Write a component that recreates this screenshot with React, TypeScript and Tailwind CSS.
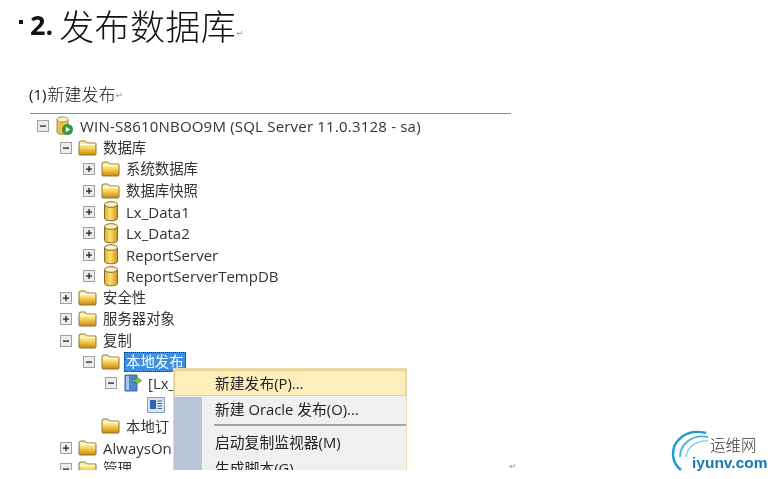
import React from "react";

const ui = "font-['Open_Sans','Noto_Sans_CJK_SC',sans-serif]";

function Exp({ open }: { open: boolean }) {
  return (
    <svg width="12" height="12" viewBox="0 0 12 12" className="shrink-0">
      <rect x="0.5" y="0.5" width="11" height="11" fill="#ececec" stroke="#a0a0a0" />
      <rect x="3" y="5.4" width="6" height="1.4" fill="#333" />
      {!open && <rect x="5.3" y="3" width="1.4" height="6" fill="#333" />}
    </svg>
  );
}

function Folder() {
  return (
    <svg width="19" height="16" viewBox="0 0 19 16" className="shrink-0">
      <defs>
        <linearGradient id="fg" x1="0" y1="0" x2="0" y2="1">
          <stop offset="0" stopColor="#fff3c4" />
          <stop offset="0.45" stopColor="#fbdc62" />
          <stop offset="1" stopColor="#c98610" />
        </linearGradient>
      </defs>
      <path d="M1 3 Q1 1 3 1 H7 L9 3 H17 Q18 3 18 4 V14 Q18 15 17 15 H2 Q1 15 1 14 Z" fill="url(#fg)" stroke="#8f7638" strokeWidth="1" />
      <path d="M2 4.5 H17" stroke="#fffbe6" strokeWidth="1.6" />
    </svg>
  );
}

function Db() {
  return (
    <svg width="16" height="21" viewBox="0 0 16 21" className="shrink-0">
      <defs>
        <linearGradient id="dbg" x1="0" y1="0" x2="1" y2="0">
          <stop offset="0" stopColor="#e3ac22" />
          <stop offset="0.45" stopColor="#fbe06e" />
          <stop offset="1" stopColor="#cf9518" />
        </linearGradient>
      </defs>
      <path d="M1.5 3.5 V17.5 C1.5 20.5 14.5 20.5 14.5 17.5 V3.5 Z" fill="url(#dbg)" stroke="#7d6b3a" strokeWidth="1" />
      <ellipse cx="8" cy="3.5" rx="6.5" ry="2.8" fill="#fdf3c0" stroke="#7d6b3a" strokeWidth="1" />
    </svg>
  );
}

function ServerIcon() {
  return (
    <svg width="20" height="20" viewBox="0 0 20 20" className="shrink-0">
      <path d="M2 3.5 V16.5 C2 19 13 19 13 16.5 V3.5 Z" fill="#eec04f" stroke="#9b8448" strokeWidth="0.9" />
      <ellipse cx="7.5" cy="3.5" rx="5.5" ry="2.6" fill="#fdf0b8" stroke="#9b8448" strokeWidth="0.9" />
      <circle cx="12.5" cy="13.5" r="5.5" fill="#2f9b3b" />
      <path d="M10.8 10.7 L15.3 13.5 L10.8 16.3 Z" fill="#fff" />
    </svg>
  );
}

function PubIcon() {
  return (
    <svg width="20" height="20" viewBox="0 0 20 20" className="shrink-0">
      <path d="M2 2 H14 V18 H2 Z" fill="#4f86cf" stroke="#3a5f9a" strokeWidth="0.9" />
      <path d="M3 3 H6 V17 H3 Z" fill="#a8c8ee" />
      <path d="M9 6.5 H13 V3.5 L18.5 7.5 L13 11.5 V8.8 H9 Z" fill="#7cc04b" stroke="#48802e" strokeWidth="0.7" />
    </svg>
  );
}

function ArticleIcon() {
  return (
    <svg width="18" height="16" viewBox="0 0 18 16" className="shrink-0">
      <rect x="0.5" y="0.5" width="17" height="15" fill="#dbe6f4" stroke="#8aa0bd" />
      <rect x="3" y="3" width="6" height="9" fill="#2f63b5" />
      <path d="M10.5 4 H15 M10.5 6.5 H15 M10.5 9 H15 M10.5 11.5 H15" stroke="#41618f" strokeWidth="1" />
    </svg>
  );
}

function Cjk({ children }: { children: React.ReactNode }) {
  return <span className="text-[14.4px]">{children}</span>;
}

function Row({
  pl,
  exp,
  icon,
  children,
}: {
  pl: string;
  exp?: boolean;
  icon: React.ReactNode;
  children: React.ReactNode;
}) {
  return (
    <div className={`flex h-[21.45px] items-center whitespace-nowrap ${pl}`}>
      <div className="flex w-[13px] shrink-0 justify-start">{exp !== undefined && <Exp open={exp} />}</div>
      <div className="ml-[4px] flex w-[21px] shrink-0 justify-center">{icon}</div>
      <div className="ml-[5px] flex items-center">{children}</div>
    </div>
  );
}

function Ret({ className = "" }: { className?: string }) {
  return <span className={`font-['DejaVu_Sans',sans-serif] text-[9px] leading-none text-[#9a9a9a] ${className}`}>↵</span>;
}

function MenuItem({ children, hot }: { children: React.ReactNode; hot?: boolean }) {
  return (
    <div className={`flex h-[26px] items-center ${hot ? "border border-[#e5cf8e] bg-[#fdeebb] pl-[40px]" : "pl-[41px]"}`}>
      {children}
    </div>
  );
}

export default function App() {
  return (
    <div className={`h-[479px] w-[773px] overflow-hidden bg-white text-[#222] blur-[0.4px] ${ui}`}>
      <div className="flex h-[78px] items-start pl-[19px] pt-[3px]">
        <span className="mt-[17px] h-[4px] w-[4px] shrink-0 bg-[#111]" />
        <span className="ml-[7px] font-['Open_Sans',sans-serif] text-[27px] font-bold leading-[44px] text-[#111]">2.</span>
        <span className="ml-[6px] font-['Noto_Sans_CJK_SC',sans-serif] text-[35px] font-light leading-[44px] tracking-[0.4px] text-[#111]">发布数据库</span>
        <Ret className="mt-[26px]" />
      </div>
      <div className="flex h-[35px] items-center pb-[3px] pl-[29px] text-[15px] text-[#111]">
        <span>(1)</span>
        <span className="ml-[1px] font-['Noto_Sans_CJK_SC',sans-serif] text-[17px] font-light">新建发布</span>
        <Ret className="mt-[3px]" />
      </div>
      <div className="flex h-[366px]">
        <div className="relative ml-[30px] h-[357px] w-[481px] overflow-hidden border-t border-[#8a8a8a] pt-[1.5px] text-[15px] text-[#333]">
          <Row pl="pl-[7px]" exp={true} icon={<ServerIcon />}>
            <span className="tracking-[0.2px]">WIN-S8610NBOO9M (SQL Server 11.0.3128 - sa)</span>
          </Row>
          <Row pl="pl-[30px]" exp={true} icon={<Folder />}><Cjk>数据库</Cjk></Row>
          <Row pl="pl-[53px]" exp={false} icon={<Folder />}><Cjk>系统数据库</Cjk></Row>
          <Row pl="pl-[53px]" exp={false} icon={<Folder />}><Cjk>数据库快照</Cjk></Row>
          <Row pl="pl-[53px]" exp={false} icon={<Db />}>Lx_Data1</Row>
          <Row pl="pl-[53px]" exp={false} icon={<Db />}>Lx_Data2</Row>
          <Row pl="pl-[53px]" exp={false} icon={<Db />}>ReportServer</Row>
          <Row pl="pl-[53px]" exp={false} icon={<Db />}>ReportServerTempDB</Row>
          <Row pl="pl-[30px]" exp={false} icon={<Folder />}><Cjk>安全性</Cjk></Row>
          <Row pl="pl-[30px]" exp={false} icon={<Folder />}><Cjk>服务器对象</Cjk></Row>
          <Row pl="pl-[30px]" exp={true} icon={<Folder />}><Cjk>复制</Cjk></Row>
          <Row pl="pl-[53px]" exp={true} icon={<Folder />}>
            <span className="-ml-[2px] border border-dotted border-[#333] bg-[#3d8fe6] px-[1px] text-[14.4px] leading-[18px] text-white">本地发布</span>
          </Row>
          <Row pl="pl-[75px]" exp={true} icon={<PubIcon />}>[Lx_</Row>
          <Row pl="pl-[98px]" icon={<ArticleIcon />}>&nbsp;</Row>
          <Row pl="pl-[53px]" icon={<Folder />}><Cjk>本地订</Cjk></Row>
          <Row pl="pl-[30px]" exp={false} icon={<Folder />}>AlwaysOn</Row>
          <Row pl="pl-[30px]" exp={true} icon={<Folder />}><Cjk>管理</Cjk></Row>

          <div className="absolute left-[143px] top-[254px] h-[103px] w-[234px] overflow-hidden border-x border-t-2 border-[#ecdcaa] bg-[#f0f0f0] text-[14.8px] text-[#222]">
            <div className="absolute bottom-0 left-0 top-[27px] w-[28px] bg-[#b8c5d6]" />
            <div className="relative">
              <MenuItem hot>新建发布(P)...</MenuItem>
              <MenuItem>新建 Oracle 发布(O)...</MenuItem>
              <div className="mb-[3px] ml-[40px] mt-[2px] h-[2px] bg-[#a6a6a6]" />
              <MenuItem>启动复制监视器(M)</MenuItem>
              <MenuItem>生成脚本(G)...</MenuItem>
            </div>
          </div>
        </div>
        <div className="flex flex-col justify-end pb-[8px]">
          <Ret className="ml-[-2px] h-[9px]" />
        </div>
        <div className="ml-auto mr-[3px] flex items-end">
          <div className="flex h-[52px] w-[100px] items-center">
            <svg width="40" height="50" viewBox="0 0 40 50" className="-mr-[18px] -mt-[2px] shrink-0">
              <path d="M36 6 C16 1 2 14 3 29 C4 36 7 40 11 43" fill="none" stroke="#1f9ad6" strokeWidth="2.4" />
              <path d="M38 10 C22 7 10 17 10 30" fill="none" stroke="#45b2e0" strokeWidth="1.8" />
              <path d="M38 14 C27 13 17 20 16 30" fill="none" stroke="#7fcdec" strokeWidth="1.4" />
            </svg>
            <div className="flex flex-col items-end">
              <span className="mr-[11px] font-['Noto_Sans_CJK_SC',sans-serif] text-[15.5px] font-light leading-[20px] text-[#333]">运维网</span>
              <span className="font-['Liberation_Sans',sans-serif] text-[15.5px] font-bold leading-[18px] text-[#1579b8]">iyunv.com</span>
            </div>
          </div>
        </div>
      </div>
    </div>
  );
}
